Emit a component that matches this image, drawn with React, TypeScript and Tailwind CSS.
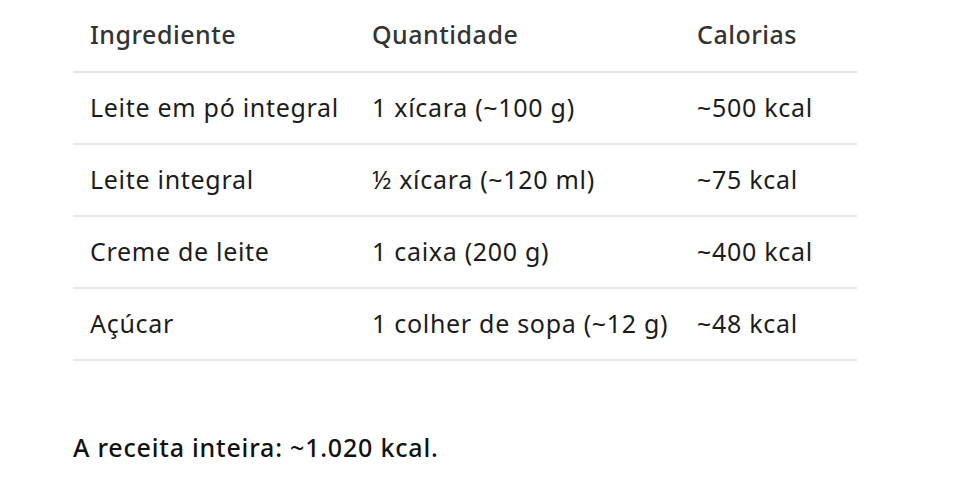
import React from "react";

const rows = [
  ["Leite em pó integral", "1 xícara (~100 g)", "~500 kcal"],
  ["Leite integral", "½ xícara (~120 ml)", "~75 kcal"],
  ["Creme de leite", "1 caixa (200 g)", "~400 kcal"],
  ["Açúcar", "1 colher de sopa (~12 g)", "~48 kcal"],
];

export default function App() {
  return (
    <div
      className="w-[960px] h-[487px] bg-white text-[#1c1c1c] overflow-hidden"
      style={{ fontFamily: '"Noto Sans", "Open Sans", sans-serif' }}
    >
      <div className="pl-[73px] w-[857px]">
        <table className="w-[784px] border-collapse text-[25px]">
          <thead>
            <tr className="h-[72px] border-b-2 border-[#e4e4e4]">
              <th className="w-[282px] pl-[17px] pb-[1px] text-left font-medium tracking-[0.5px] text-[#333]">Ingrediente</th>
              <th className="w-[325px] pl-[17px] pb-[1px] text-left font-medium tracking-[0.5px] text-[#333]">Quantidade</th>
              <th className="pl-[17px] pb-[1px] text-left font-medium tracking-[0.5px] text-[#333]">Calorias</th>
            </tr>
          </thead>
          <tbody>
            {rows.map((r) => (
              <tr key={r[0]} className="h-[72px] border-b-2 border-[#e8e8e8]">
                {r.map((c) => (
                  <td key={c} className="pl-[17px] whitespace-nowrap tracking-[0.7px]">{c}</td>
                ))}
              </tr>
            ))}
          </tbody>
        </table>
        <p className="mt-[68px] font-medium text-[25px] tracking-[0.8px] text-[#111]">A receita inteira: ~1.020 kcal.</p>
      </div>
    </div>
  );
}
